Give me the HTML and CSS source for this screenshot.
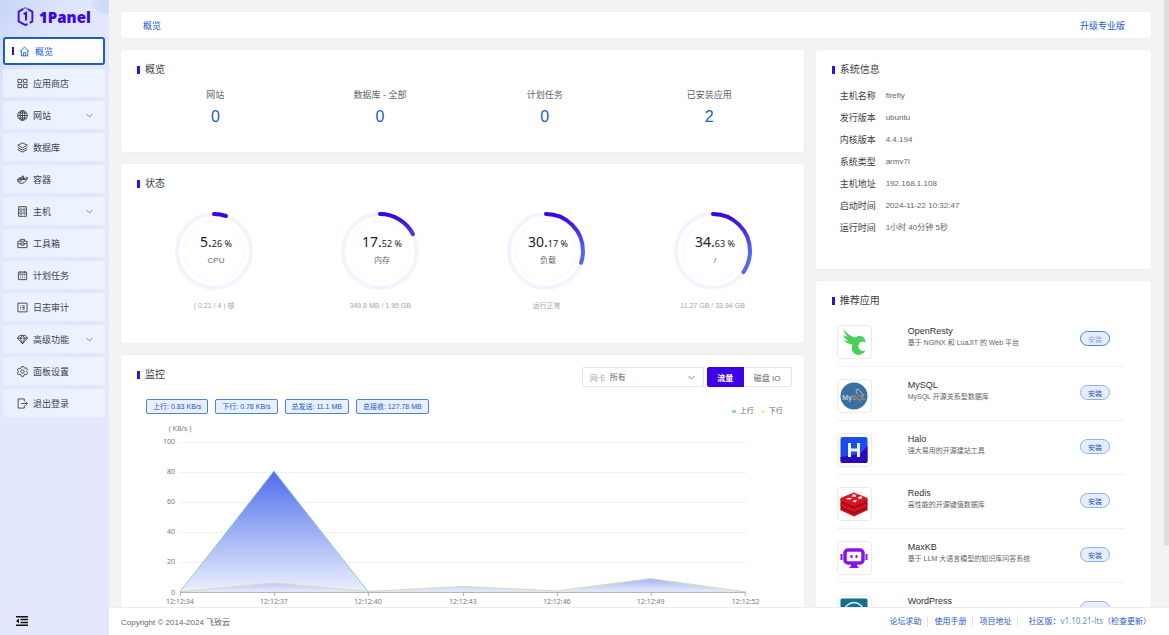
FILE: index.html
```html
<!DOCTYPE html>
<html lang="zh-CN">
<head>
  <meta charset="UTF-8">
  <meta name="viewport" content="width=device-width, initial-scale=1.0">
  <title>1Panel</title>
  <link rel="stylesheet" href="styles.css">
</head>
<body>
  <div class="app">
    <aside class="sidebar">
      <div class="logo">
        <svg viewBox="0 0 32 36" width="17" height="19" fill="none" stroke="#3a12e6" stroke-width="3.6">
          <path d="M12 3.5 3 8.8v18.4l13 7.2 4-2.3M20 3.8l9 5v18.4l-5 2.8"/>
          <path d="M12 3.500l4-2 4 2.300" stroke="#5a86f0" stroke-width="3"/>
          <path d="M12.500 13.500 17 11v14.500" stroke-width="4"/>
        </svg>
        <span>1Panel</span>
      </div>
      <nav class="menu">
        <a class="menu-item active" href="#">
          <svg class="icon" viewBox="0 0 24 24"><path d="M2 12 12 2.500 22 12M5 10v11.500h14V10M9.500 21v-6.500h5V21"/></svg>
          <span>概览</span>
        </a>
        <a class="menu-item" href="#">
          <svg class="icon" viewBox="0 0 24 24"><path d="M2 3h8v7H2zM14 3h8v7h-8zM2 14h8v7H2zM14 14h8v7h-8z"/></svg>
          <span>应用商店</span>
        </a>
        <a class="menu-item" href="#">
          <svg class="icon" viewBox="0 0 24 24"><circle cx="12" cy="12" r="10.500"/><ellipse cx="12" cy="12" rx="5" ry="10.500"/><path d="M12 1.500v21M1.500 12h21M3.500 6.500h17M3.500 17.500h17"/></svg>
          <span>网站</span>
          <svg class="arrow" viewBox="0 0 12 12"><path d="m1 3.500 5 5 5-5"/></svg>
        </a>
        <a class="menu-item" href="#">
          <svg class="icon" viewBox="0 0 24 24"><path d="m12 2 10.500 5L12 12.500 1.500 7zM1.500 12 12 17.500 22.500 12M1.500 16.500 12 22l10.500-5.500"/></svg>
          <span>数据库</span>
        </a>
        <a class="menu-item" href="#">
          <svg class="icon" viewBox="0 0 24 24"><path d="M1 12h17c1 0 2-.5 2.500-1.500-1-1.500-.8-3 .2-4.200 1 .6 1.500 1.600 1.600 2.700.8 0 1.200.1 1.700.4-.8 1.900-2 2.600-3.800 2.600C18.500 17.500 14.500 20.500 9 20.500c-5 0-8-3-8-8.500z"/><path d="M4 12V8.500h13V12M7.500 8.500V12M11 4.500V12M14 4.500V12M11 4.500h3M2 15.500h9"/></svg>
          <span>容器</span>
        </a>
        <a class="menu-item" href="#">
          <svg class="icon" viewBox="0 0 24 24"><path d="M3.500 1.500h17v21h-17zM3.500 8.500h17M3.500 15.500h17M7 5h3M7 12h3M7 19h3M14 5h3M14 12h3M15.500 19h1.500"/></svg>
          <span>主机</span>
          <svg class="arrow" viewBox="0 0 12 12"><path d="m1 3.500 5 5 5-5"/></svg>
        </a>
        <a class="menu-item" href="#">
          <svg class="icon" viewBox="0 0 24 24"><path d="M2 7h20v14H2zM7.500 7V3h9v4M2 12.500h6.500M15.500 12.500H22M8.500 11h7v4.500h-7z"/></svg>
          <span>工具箱</span>
        </a>
        <a class="menu-item" href="#">
          <svg class="icon" viewBox="0 0 24 24"><path d="M3 4.500h18V21H3zM3 9h18M8 2.500v4M16 2.500v4M7 13h2M11 13h2M15 13h2M7 17h2M11 17h2M15 17h2"/></svg>
          <span>计划任务</span>
        </a>
        <a class="menu-item" href="#">
          <svg class="icon" viewBox="0 0 24 24"><path d="M2 2.500h20v19H2zM7 8.500h2M11.500 8.500H17M7 12h2M11.500 12H17M7 15.500h2M11.500 15.500H17"/></svg>
          <span>日志审计</span>
        </a>
        <a class="menu-item" href="#">
          <svg class="icon" viewBox="0 0 24 24"><path d="M6 3h12l5 6-11 12.500L1 9zM1 9h22M7 9l5 12 5-12M7 9l5-6 5 6"/></svg>
          <span>高级功能</span>
          <svg class="arrow" viewBox="0 0 12 12"><path d="m1 3.500 5 5 5-5"/></svg>
        </a>
        <a class="menu-item" href="#">
          <svg class="icon" viewBox="0 0 24 24"><path d="m9.500 1.500-.8 3.100-2.400 1.400-3.100-.9-2.500 4.300 2.300 2.200v1.800L.7 14.600l2.500 4.300 3.100-.9 2.400 1.400.8 3.100h5l.8-3.100 2.400-1.400 3.100.9 2.500-4.300-2.300-2.200v-1.800l2.300-2.200-2.500-4.300-3.100.9-2.400-1.400-.8-3.100z"/><circle cx="12" cy="12" r="3.800"/></svg>
          <span>面板设置</span>
        </a>
        <a class="menu-item" href="#">
          <svg class="icon" viewBox="0 0 24 24"><path d="M16 7V2H2.500v20H16v-5M9 12h13M18 7.500l4.500 4.500-4.500 4.500"/></svg>
          <span>退出登录</span>
        </a>
      </nav>
      <button class="collapse" type="button" aria-label="收起菜单">
        <svg viewBox="0 0 24 20" width="12" height="10" fill="#111"><path d="M0 0h24v3H0zM9 5.700h15v3H9zM9 11.300h15v3H9zM0 17h24v3H0zM6 5v10L0 10z"/></svg>
      </button>
    </aside>

    <div class="main">
      <main class="content">
        <div class="topbar">
          <a href="#">概览</a>
          <a href="#">升级专业版</a>
        </div>

        <div class="columns">
          <div class="col-left">
            <section class="card overview">
              <h2 class="card-title">概览</h2>
              <div class="stats">
                <div class="stat"><span>网站</span><a href="#">0</a></div>
                <div class="stat"><span>数据库 - 全部</span><a href="#">0</a></div>
                <div class="stat"><span>计划任务</span><a href="#">0</a></div>
                <div class="stat"><span>已安装应用</span><a href="#">2</a></div>
              </div>
            </section>

            <section class="card status">
              <h2 class="card-title">状态</h2>
              <div class="gauges">
                <div class="gauge">
                  <svg viewBox="0 0 80 80" width="80" height="80">
                    <defs>
                      <linearGradient id="arc" x1="0" y1="0" x2="1" y2="0">
                        <stop offset="0.500" stop-color="#5566f0"/>
                        <stop offset="1" stop-color="#3d00e0"/>
                      </linearGradient>
                    </defs>
                    <circle class="track" cx="40" cy="40" r="37"/>
                    <circle class="inner" cx="40" cy="40" r="30"/>
                    <circle class="bar" cx="40" cy="40" r="37" pathLength="100" stroke-dasharray="5.26 100" transform="rotate(-90 40 40)"/>
                    <text class="num" x="42" y="36">5.<tspan>26 %</tspan></text>
                    <text class="name" x="42" y="52">CPU</text>
                  </svg>
                  <p>( 0.21 / 4 ) 核</p>
                </div>
                <div class="gauge">
                  <svg viewBox="0 0 80 80" width="80" height="80">
                    <circle class="track" cx="40" cy="40" r="37"/>
                    <circle class="inner" cx="40" cy="40" r="30"/>
                    <circle class="bar" cx="40" cy="40" r="37" pathLength="100" stroke-dasharray="17.52 100" transform="rotate(-90 40 40)"/>
                    <text class="num" x="42" y="36">17.<tspan>52 %</tspan></text>
                    <text class="name" x="42" y="52">内存</text>
                  </svg>
                  <p>349.8 MB / 1.95 GB</p>
                </div>
                <div class="gauge">
                  <svg viewBox="0 0 80 80" width="80" height="80">
                    <circle class="track" cx="40" cy="40" r="37"/>
                    <circle class="inner" cx="40" cy="40" r="30"/>
                    <circle class="bar" cx="40" cy="40" r="37" pathLength="100" stroke-dasharray="30.17 100" transform="rotate(-90 40 40)"/>
                    <text class="num" x="42" y="36">30.<tspan>17 %</tspan></text>
                    <text class="name" x="42" y="52">负载</text>
                  </svg>
                  <p>运行正常</p>
                </div>
                <div class="gauge">
                  <svg viewBox="0 0 80 80" width="80" height="80">
                    <circle class="track" cx="40" cy="40" r="37"/>
                    <circle class="inner" cx="40" cy="40" r="30"/>
                    <circle class="bar" cx="40" cy="40" r="37" pathLength="100" stroke-dasharray="34.63 100" transform="rotate(-90 40 40)"/>
                    <text class="num" x="42" y="36">34.<tspan>63 %</tspan></text>
                    <text class="name" x="42" y="52">/</text>
                  </svg>
                  <p>11.27 GB / 33.94 GB</p>
                </div>
              </div>
            </section>

            <section class="card monitor">
              <div class="monitor-head">
                <h2 class="card-title">监控</h2>
                <div class="controls">
                  <div class="select-box">
                    <label for="netcard">网卡</label>
                    <select id="netcard"><option>所有</option></select>
                    <svg class="arrow" viewBox="0 0 12 12"><path d="m1 3.500 5 5 5-5"/></svg>
                  </div>
                  <div class="switch">
                    <button class="on" type="button">流量</button>
                    <button type="button">磁盘 IO</button>
                  </div>
                </div>
              </div>
              <div class="monitor-info">
                <div class="tags">
                  <span class="tag">上行: 0.83 KB/s</span>
                  <span class="tag">下行: 0.78 KB/s</span>
                  <span class="tag">总发送: 11.1 MB</span>
                  <span class="tag">总接收: 127.78 MB</span>
                </div>
                <div class="legend">
                  <span class="up">上行</span>
                  <span class="down">下行</span>
                </div>
              </div>
              <svg class="chart" viewBox="0 0 683 200">
                <defs>
                  <linearGradient id="fillUp" gradientUnits="userSpaceOnUse" x1="0" y1="54" x2="0" y2="176">
                    <stop offset="0" stop-color="#4f6cec"/>
                    <stop offset="0.500" stop-color="#9db0f4"/>
                    <stop offset="1" stop-color="#edf1fe"/>
                  </linearGradient>
                  <linearGradient id="fillDown" x1="0" y1="0" x2="0" y2="1">
                    <stop offset="0" stop-color="#7b92ee"/>
                    <stop offset="1" stop-color="#e6eafc"/>
                  </linearGradient>
                </defs>
                <text class="unit" x="59" y="14">( KB/s )</text>
                <g class="grid-lines">
                  <path d="M59 25.500h566M59 55.500h566M59 85.500h566M59 115.500h566M59 145.500h566"/>
                </g>
                <g class="y-labels">
                  <text x="54" y="27">100</text>
                  <text x="54" y="57">80</text>
                  <text x="54" y="87">60</text>
                  <text x="54" y="117">40</text>
                  <text x="54" y="147">20</text>
                  <text x="54" y="178">0</text>
                </g>
                <path fill="url(#fillUp)" d="M59 175 153 54l94 120.500 95-5 94 4.500 94-11.500 95 12.500H59z"/>
                <path fill="none" stroke="#8fcdc4" d="M59 175 153 54l94 120.500"/>
                <path fill="url(#fillDown)" opacity="0.600" d="M59 175l94-9 94 8.500 95-5 94 4.500 94-12.500 95 13.500z"/>
                <path fill="none" stroke="#d5deb4" d="M59 175l94-9 94 8.500 95-5 94 4.500 94-12.500 95 13.500"/>
                <path class="axis" d="M59 175.500h566M59.500 175v4M153.500 175v4M247.500 175v4M342.500 175v4M436.500 175v4M530.500 175v4M624.500 175v4"/>
                <g class="x-labels">
                  <text x="59" y="187">12:12:34</text>
                  <text x="153" y="187">12:12:37</text>
                  <text x="247" y="187">12:12:40</text>
                  <text x="342" y="187">12:12:43</text>
                  <text x="436" y="187">12:12:46</text>
                  <text x="530" y="187">12:12:49</text>
                  <text x="625" y="187">12:12:52</text>
                </g>
              </svg>
            </section>
          </div>

          <div class="col-right">
            <section class="card system">
              <h2 class="card-title">系统信息</h2>
              <dl class="info">
                <dt>主机名称</dt><dd>firefly</dd>
                <dt>发行版本</dt><dd>ubuntu</dd>
                <dt>内核版本</dt><dd>4.4.194</dd>
                <dt>系统类型</dt><dd>armv7l</dd>
                <dt>主机地址</dt><dd>192.168.1.108</dd>
                <dt>启动时间</dt><dd>2024-11-22 10:32:47</dd>
                <dt>运行时间</dt><dd>1小时 40分钟 5秒</dd>
              </dl>
            </section>

            <section class="card apps">
              <h2 class="card-title">推荐应用</h2>
              <ul class="app-list">
                <li class="app-row">
                  <div class="app-icon">
                    <svg viewBox="0 0 28 28"><path fill="#4bd15a" d="M3.500 1c3.500 4.500 7.500 8 12 8.500 1.500-1.700 4-2 6.200-1.200 1.800.7 3 2 3.300 3.900l.8 2.300-2.600-.8c-3.200-.5-5 2-4.700 5 .3 3.300 3.500 5 6.800 3.800-2.300 4.800-8.800 6-12 2-2-2.500-1.800-5.500-1-8-3-.3-6-1.500-8.300-4l4.500.5C6 11.500 4 9.500 3 7l4.500 2C5.500 6.500 4 4 3.500 1z"/></svg>
                  </div>
                  <div class="app-text"><h3>OpenResty</h3><p>基于 NGINX 和 LuaJIT 的 Web 平台</p></div>
                  <button class="install off" type="button">安装</button>
                </li>
                <li class="app-row">
                  <div class="app-icon">
                    <svg viewBox="0 0 28 28"><circle cx="14" cy="14" r="13.500" fill="#3b6f9f"/><path d="M17 12c-.5-2-1.500-3.500 0-5 2 0 3.500 2 4.500 4.500l2 1.500-1.500 1.500" fill="none" stroke="#c9dbe8" stroke-width="0.800"/><text class="mysql" x="14" y="18">My<tspan>SQL</tspan></text></svg>
                  </div>
                  <div class="app-text"><h3>MySQL</h3><p>MySQL 开源关系型数据库</p></div>
                  <button class="install" type="button">安装</button>
                </li>
                <li class="app-row">
                  <div class="app-icon">
                    <svg viewBox="0 0 28 28"><rect x="0.500" y="1" width="27" height="26" rx="2" fill="#1c4cf0"/><path d="M.5 21 20 18l7.500-8v15a2 2 0 0 1-2 2h-23a2 2 0 0 1-2-2z" fill="#2a08c0"/><path d="M9.500 7v14M18.500 7v14M9.500 14h9" stroke="#eef2ff" stroke-width="3"/></svg>
                  </div>
                  <div class="app-text"><h3>Halo</h3><p>强大易用的开源建站工具</p></div>
                  <button class="install" type="button">安装</button>
                </li>
                <li class="app-row">
                  <div class="app-icon">
                    <svg viewBox="0 0 28 28"><path fill="#a30d16" d="M.5 9 14 14.500 27.500 9v11L14 26 .5 20z"/><path fill="#dc1220" d="M.5 8 14 2.500 27.500 8v2.500L14 16.500.5 10.500zM.5 13 14 19l13.500-6v3L14 22 .5 16zM.5 18.500l13.500 6 13.500-6V20L14 26.500.5 20z"/><path fill="#fff" d="m13 4 1.500.8L17 4.500l-1.500 1.300.8 1.200-2.500-.6-2 .4.600-1.300zM6 8.500c2-1.200 5-1 6 0-1.500 1.300-4.500 1.300-6 0zM12 11l5-1.500-1.500 3zM17.500 7.500l3.500-1.500 1.500 2-3 1.200z"/></svg>
                  </div>
                  <div class="app-text"><h3>Redis</h3><p>高性能的开源键值数据库</p></div>
                  <button class="install" type="button">安装</button>
                </li>
                <li class="app-row">
                  <div class="app-icon">
                    <svg viewBox="0 0 28 28"><rect x="5" y="6" width="18" height="13" rx="3" fill="#fff" stroke="#8a10f0" stroke-width="3.500"/><path d="M1.500 10v6M26.500 10v6" stroke="#8a10f0" stroke-width="2"/><path d="M11.500 11v3M16.500 11v3" stroke="#8a10f0" stroke-width="2"/><path d="M11 20h6v2.500h1.500V24h-9v-1.500H11z" fill="#8a10f0"/></svg>
                  </div>
                  <div class="app-text"><h3>MaxKB</h3><p>基于 LLM 大语言模型的知识库问答系统</p></div>
                  <button class="install" type="button">安装</button>
                </li>
                <li class="app-row">
                  <div class="app-icon">
                    <svg viewBox="0 0 28 28"><rect x="0.500" y="0.500" width="27" height="27" rx="1.500" fill="#15708f"/><circle cx="14" cy="14" r="9.500" fill="none" stroke="#dceef4" stroke-width="1.500"/><path d="m7 10 4 11 3-9 3 9 4-11" fill="none" stroke="#dceef4" stroke-width="2"/></svg>
                  </div>
                  <div class="app-text"><h3>WordPress</h3></div>
                  <button class="install" type="button" aria-label="安装"></button>
                </li>
              </ul>
            </section>
          </div>
        </div>
      </main>

      <footer class="footer">
        <span class="copyright">Copyright © 2014-2024 飞致云</span>
        <div class="links">
          <a href="#">论坛求助</a>
          <a href="#">使用手册</a>
          <a href="#">项目地址</a>
          <span class="version">社区版：<em>v1.10.21-lts</em>（<a href="#">检查更新</a>）</span>
        </div>
      </footer>
      <div class="scroll-thumb"></div>
    </div>
  </div>
</body>
</html>
```
FILE: styles.css
```css
* {
  box-sizing: border-box;
}

body {
  margin: 0;
  font-family: "Liberation Sans", "Noto Sans CJK SC", sans-serif;
  font-size: 8px;
  color: #5f646b;
  background: #f3f3f3;
}

h2, h3, p, ul, dl, dd {
  margin: 0;
  padding: 0;
}

a {
  color: #1a5cc8;
  text-decoration: none;
}

button, select {
  font-family: inherit;
  font-size: inherit;
  padding: 0;
  cursor: pointer;
}

.app {
  display: flex;
  height: 100vh;
}

/* sidebar */
.sidebar {
  display: flex;
  flex-direction: column;
  width: 109px;
  padding: 0 4px 8px 3px;
  background:
    radial-gradient(circle at 106px 0, #c9d6f6 0, #d5dffa 14px, transparent 15px),
    linear-gradient(125deg, #c9d5f8 0, #dfe5fd 60px, #e3e8fe 100px);
}

.logo {
  display: flex;
  align-items: center;
  gap: 5px;
  height: 33px;
  margin-bottom: 4px;
  padding-left: 14px;
  color: #3a08e6;
  font-family: "Noto Sans", sans-serif;
  font-size: 15px;
  font-weight: 900;
}

.menu {
  display: flex;
  flex-direction: column;
  gap: 4px;
}

.menu-item {
  display: flex;
  align-items: center;
  gap: 5px;
  height: 28px;
  padding: 0 12px 0 14px;
  border-radius: 2px;
  background: linear-gradient(100deg, #eaf0fe, #edf4ff);
  color: #3c4250;
  font-size: 9px;
}

.menu-item.active {
  padding-left: 7px;
  border: 2px solid #1d5fc0;
  border-radius: 3px;
  background: #fff;
  color: #1a5cd6;
}

.menu-item.active::before {
  content: "";
  width: 2px;
  height: 8px;
  background: #2412d4;
}

.icon {
  width: 11px;
  height: 11px;
  fill: none;
  stroke: currentColor;
  stroke-width: 2;
}

.arrow {
  width: 7px;
  height: 7px;
  margin-left: auto;
  fill: none;
  stroke: #6f7480;
  stroke-width: 1.5;
}

.collapse {
  width: 12px;
  height: 12px;
  margin: auto 0 0 13px;
  border: 0;
  background: none;
}

.collapse svg {
  display: block;
}

/* page */
.main {
  position: relative;
  display: flex;
  flex: 1;
  flex-direction: column;
  min-width: 0;
}

.content {
  flex: 1;
  min-height: 0;
  padding: 12px 18px 12px 12px;
  overflow: hidden;
}

.scroll-thumb {
  position: absolute;
  top: 0;
  right: 0;
  width: 5px;
  height: 86%;
  border-radius: 0 0 3px 3px;
  background: #dedede;
}

.topbar {
  display: flex;
  align-items: center;
  justify-content: space-between;
  height: 26px;
  margin-bottom: 12px;
  padding: 0 26px 0 22px;
  border-radius: 3px;
  background: #fff;
  box-shadow: 0 0 3px rgba(0, 0, 0, 0.04);
  font-size: 9px;
}

.columns {
  display: grid;
  grid-template-columns: repeat(3, 1fr);
  gap: 12px;
}

.col-left, .col-right {
  display: flex;
  flex-direction: column;
  gap: 12px;
  min-width: 0;
}

.col-left {
  grid-column: span 2;
}

.card {
  padding-top: 13px;
  border-radius: 3px;
  background: #fff;
  box-shadow: 0 0 3px rgba(0, 0, 0, 0.04);
}

.card-title {
  display: flex;
  align-items: center;
  gap: 5px;
  padding-left: 16px;
  color: #3a3e44;
  font-size: 10px;
  font-weight: normal;
  line-height: 14px;
}

.card-title::before {
  content: "";
  width: 3px;
  height: 8px;
  background: #2c12d6;
}

/* overview */
.overview {
  padding-bottom: 25px;
}

.stats {
  display: grid;
  grid-template-columns: repeat(4, 1fr);
  padding: 10px 12px 0;
}

.stat {
  display: flex;
  flex-direction: column;
  align-items: center;
  gap: 4px;
  font-size: 9px;
  line-height: 16px;
}

.stat a {
  font-size: 16px;
  line-height: 20px;
}

/* status */
.status {
  padding-bottom: 31px;
}

.gauges {
  display: grid;
  grid-template-columns: repeat(4, 1fr);
  padding: 20px 8px 0 10px;
}

.gauge {
  display: flex;
  flex-direction: column;
  align-items: center;
}

.gauge p {
  margin-top: 9px;
  color: #a3a7ae;
  font-size: 7px;
  line-height: 12px;
}

.gauge circle {
  fill: none;
}

.track {
  stroke: #f2f4fe;
  stroke-width: 4;
}

.inner {
  stroke: #f8f9ff;
  stroke-width: 1;
}

.bar {
  stroke: url(#arc);
  stroke-width: 4;
  stroke-linecap: round;
}

.num {
  fill: #222;
  font-family: "Noto Sans", sans-serif;
  font-size: 14px;
  text-anchor: middle;
}

.num tspan {
  font-size: 9px;
}

.name {
  fill: #666;
  font-size: 8px;
  text-anchor: middle;
}

/* monitor */
.monitor {
  padding-top: 12px;
}

.monitor-head {
  display: flex;
  justify-content: space-between;
  align-items: flex-start;
  padding-right: 12px;
}

.monitor-head .card-title {
  padding-top: 1px;
}

.controls {
  display: flex;
  gap: 3px;
}

.select-box {
  display: flex;
  align-items: center;
  gap: 4px;
  width: 122px;
  height: 20px;
  padding: 0 8px 0 7px;
  border: 1px solid #e2e4e8;
  border-radius: 2px;
  color: #a4a8ae;
}

.select-box select {
  flex: 1;
  border: 0;
  background: none;
  color: #5f646b;
  appearance: none;
}

.switch {
  display: flex;
}

.switch button {
  width: 48px;
  height: 20px;
  border: 1px solid #e2e4e8;
  border-left: 0;
  border-radius: 0 2px 2px 0;
  background: #fff;
  color: #5f646b;
}

.switch .on {
  width: 37px;
  border: 0;
  border-radius: 2px 0 0 2px;
  background: #3d00e6;
  color: #fff;
  font-weight: bold;
}

.monitor-info {
  display: flex;
  justify-content: space-between;
  height: 18px;
  margin-top: 12px;
  padding: 0 21px 0 25px;
}

.tags {
  display: flex;
  align-items: flex-start;
  gap: 7px;
}

.tag {
  padding: 0 6px;
  border: 1px solid #4d84d2;
  border-radius: 2px;
  background: #e8effd;
  color: #1b55cc;
  font-size: 7px;
  line-height: 13px;
}

.legend {
  display: flex;
  align-items: center;
  align-self: flex-end;
  gap: 7px;
  font-size: 7px;
  line-height: 12px;
}

.legend span {
  display: flex;
  align-items: center;
  gap: 4px;
}

.legend span::before {
  content: "";
  width: 4px;
  height: 3px;
  border-radius: 1px;
  background: #92d4bd;
}

.legend .down::before {
  background: #efeea8;
}

.chart {
  display: block;
  width: 100%;
}

.chart text {
  fill: #74787e;
  font-family: "Noto Sans", sans-serif;
  font-size: 7px;
  text-anchor: middle;
}

.chart .y-labels text {
  text-anchor: end;
}

.grid-lines {
  fill: none;
  stroke: #ebebed;
  stroke-dasharray: 3 1;
}

.axis {
  fill: none;
  stroke: #a9aec0;
}

/* system info */
.system {
  padding-bottom: 30px;
}

.info {
  display: grid;
  grid-template-columns: auto 1fr;
  column-gap: 10px;
  padding: 8px 24px 0;
  line-height: 22px;
}

.info dt {
  color: #3a3e44;
  font-size: 9px;
}

/* recommended apps */
.app-list {
  padding: 5px 27px 0 21px;
  list-style: none;
}

.app-row {
  display: flex;
  align-items: flex-start;
  padding: 12px 14px 7px 0;
  border-bottom: 1px solid #f1f1f3;
}

.app-icon {
  display: flex;
  align-items: center;
  justify-content: center;
  width: 35px;
  height: 34px;
  border: 1px solid #ececee;
  border-radius: 4px;
  background: #fff;
}

.app-icon svg {
  width: 28px;
  height: 28px;
}

.mysql {
  fill: #e9f0f5;
  font-size: 7px;
  text-anchor: middle;
}

.mysql tspan {
  fill: #d0955a;
}

.app-text {
  flex: 1;
  padding-left: 36px;
}

.app-text h3 {
  color: #2f3236;
  font-size: 9px;
  font-weight: normal;
  line-height: 12px;
}

.app-text p {
  font-size: 7px;
  line-height: 11px;
}

.install {
  width: 30px;
  height: 15px;
  margin-top: 6px;
  border: 1px solid #8fb2e4;
  border-radius: 8px;
  background: #e6eefd;
  color: #1a55c0;
  font-size: 7px;
}

.install.off {
  border-color: #4a80d0;
  color: #8aa6e4;
}

/* footer */
.footer {
  display: flex;
  align-items: center;
  justify-content: space-between;
  height: 28px;
  padding: 0 18px 0 12px;
  border-top: 1px solid #ededed;
  background: #fff;
}

.links {
  display: flex;
  align-items: center;
  font-size: 8px;
  line-height: 10px;
}

.links > a {
  padding: 0 6px;
  border-right: 1px solid #e0e2e6;
}

.version {
  padding-left: 10px;
  color: #1a5cc8;
}

.version em {
  color: #6a8fd6;
  font-family: "Noto Sans", sans-serif;
  font-style: normal;
}
```
